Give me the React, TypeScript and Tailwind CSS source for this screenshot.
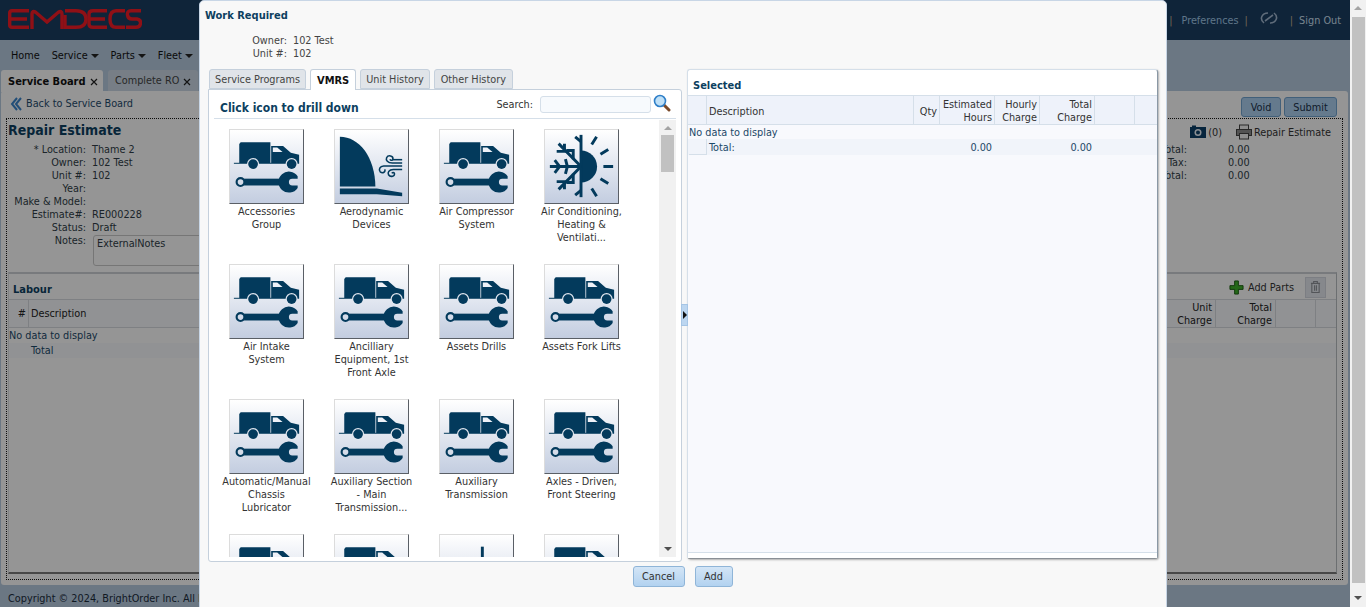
const FONT = "font-['DejaVu_Sans_Condensed','Noto_Sans',sans-serif]";

function TruckIcon() {
  return (
    <svg viewBox="0 0 75 75" className="w-full h-full">
      <path d="M9.5 14.5 L11 12.5 H41.5 V34 H9.5 Z" fill="#033a5c" />
      <path d="M42.3 16.5 H54.5 L62.5 23.5 L71 25.5 V34 H42.3 Z" fill="#033a5c" />
      <path d="M44 18 H48.5 L54 22.7 H44 Z" fill="#eef1f7" />
      <rect x="4" y="33.7" width="67" height="1" fill="#033a5c" />
      <circle cx="23.7" cy="35" r="6.2" fill="#e2e7f0" />
      <circle cx="23.7" cy="35" r="5" fill="#033a5c" />
      <circle cx="63.3" cy="35" r="6.2" fill="#e2e7f0" />
      <circle cx="63.3" cy="35" r="5" fill="#033a5c" />
      <circle cx="10.8" cy="53.5" r="4" fill="none" stroke="#033a5c" strokeWidth="2.2" />
      <rect x="14.5" y="50" width="37" height="7" fill="#033a5c" />
      <path d="M69.5 47.5 A 10.8 10.8 0 1 0 69.5 59.5 L 69.5 57 H 64 A 3.5 3.5 0 0 1 64 50 H 69.5 Z" fill="#033a5c" />
    </svg>
  );
}

function AeroIcon() {
  return (
    <svg viewBox="0 0 75 75" className="w-full h-full">
      <path d="M5 7 C 25 7 41 28 41.5 58 H5 Z" fill="#033a5c" />
      <path d="M5 60 H43 L69 64.5 V68 L43 66 H5 Z" fill="#033a5c" />
      <g fill="none" stroke="#033a5c" strokeWidth="1.6">
        <path d="M69 34 H59 C 54 34 52 31 53 28.5 C 54.5 25.5 60 26 59.5 30 C 59 31.5 57 31.5 56.5 30" />
        <path d="M69 37 H50 C 46 37 44.5 41 46.5 43 C 49 45 52.5 43 51 40.5" />
        <path d="M69 40.5 H60 C 55 40.5 54 44 55 46 C 57 49 62 47.5 61 44.5 C 60.5 43.5 59 43.5 58.5 44.5" />
        <path d="M59 30.5 H69" />
      </g>
    </svg>
  );
}

function AcIcon() {
  return (
    <svg viewBox="0 0 75 75" className="w-full h-full">
      <path d="M37 21 A 16.5 16.5 0 0 1 37 54 Z" fill="#033a5c" />
      <g stroke="#033a5c" strokeWidth="3" fill="none">
        <path d="M37 5 V69" />
        <path d="M31 7 L37 12 M31 67 L37 62" />
        <path d="M5 37.5 H37" />
        <path d="M14 14 L37 37.5 M14 61 L37 37.5" />
        <path d="M10 31 L15 37.5 L10 44" />
        <path d="M21 30 L23 37.5 L21 45" />
        <path d="M12 22 H20 V14 M22 21 H29 V30" />
        <path d="M12 53 H20 V61 M22 54 H29 V45" />
      </g>
      <g stroke="#033a5c" strokeWidth="3" fill="none">
        <path d="M48 15 L53 7 M57 25 L65 20 M60 37.5 H70 M57 50 L65 55 M48 60 L53 68" />
      </g>
    </svg>
  );
}

function PartIcon() {
  return (
    <svg viewBox="0 0 75 75" className="w-full h-full">
      <rect x="42" y="12" width="3" height="63" fill="#033a5c" />
    </svg>
  );
}

const items: { label: string[]; icon?: "aero" | "ac" | "part" }[] = [
  { label: ["Accessories", "Group"] },
  { label: ["Aerodynamic", "Devices"], icon: "aero" },
  { label: ["Air Compressor", "System"] },
  { label: ["Air Conditioning,", "Heating &", "Ventilati..."], icon: "ac" },
  { label: ["Air Intake", "System"] },
  { label: ["Ancilliary", "Equipment, 1st", "Front Axle"] },
  { label: ["Assets Drills"] },
  { label: ["Assets Fork Lifts"] },
  { label: ["Automatic/Manual", "Chassis", "Lubricator"] },
  { label: ["Auxiliary Section", "- Main", "Transmission..."] },
  { label: ["Auxiliary", "Transmission"] },
  { label: ["Axles - Driven,", "Front Steering"] },
  { label: [] },
  { label: [] },
  { label: [], icon: "part" },
  { label: [] },
];

function Tile({ label, icon }: { label: string[]; icon?: "aero" | "ac" | "part" }) {
  return (
    <div className="h-[135px] flex flex-col items-center">
      <div className="w-[75px] h-[75px] shrink-0 border-t border-l border-t-[#dcdcdc] border-l-[#dcdcdc] border-r border-b border-r-[#5a5f66] border-b-[#5a5f66] bg-gradient-to-b from-white to-[#c3cde0]">
        {icon === "aero" ? <AeroIcon /> : icon === "ac" ? <AcIcon /> : icon === "part" ? <PartIcon /> : <TruckIcon />}
      </div>
      <div className="mt-[1px] text-center leading-[13px] text-[#333]">
        {label.map((l) => (
          <div key={l}>{l}</div>
        ))}
      </div>
    </div>
  );
}

function Caret() {
  return <span className="inline-block ml-[3px] mb-[1px] border-x-[4px] border-x-transparent border-t-[4px] border-t-[#222]" />;
}

function CloseX() {
  return (
    <svg viewBox="0 0 8 8" className="w-[8px] h-[8px] mt-[2px]" fill="none" stroke="#222" strokeWidth="1.2">
      <path d="M1 1 L7 7 M7 1 L1 7" />
    </svg>
  );
}

function PageBehind() {
  return (
    <div className="w-[1350px] h-[607px] overflow-hidden bg-[#b2c6da] text-[10.8px] leading-[13px] text-[#333] relative">
      {/* Header */}
      <div className="h-10 bg-[#193c5f] flex items-center justify-between pr-[9px]">
        <svg viewBox="0 0 134 20" className="ml-[8px] w-[134px] h-[20px] mb-[2px]" fill="none" stroke="#ee1c25" strokeWidth="3.4">
          <path d="M21 1.7 H4 Q1.7 1.7 1.7 4 V16 Q1.7 18.3 4 18.3 H21 M1.7 10 H19" />
          <path d="M24 20 V5 Q24 1 28 3.5 L39 13 L50 3.5 Q54 1 54 5 V20" />
          <path d="M57 1.7 H68 Q78 1.7 78 10 Q78 18.3 68 18.3 H57 V6" />
          <path d="M99 1.7 H85 Q81 1.7 81 5 V15 Q81 18.3 85 18.3 H99 M81 10 H97" />
          <path d="M117 1.7 H108 Q102 1.7 102 10 Q102 18.3 108 18.3 H117" />
          <path d="M133 1.7 H123 Q119 1.7 119.5 6 Q120 10 124 10 H129 Q133 10.5 132.5 14.5 Q132 18.3 128 18.3 H118" />
        </svg>
        <div className="flex items-center text-[#9fc4e2]">
          <span className="text-[#b9a98f]">|</span>
          <span className="ml-[9px]">Preferences</span>
          <span className="ml-[6px] text-[#b9a98f]">|</span>
          <svg viewBox="0 0 18 12" className="ml-[12px] w-[18px] h-[12px] mb-[4px]" fill="none" stroke="#9fb4cc" strokeWidth="1.6">
            <path d="M4 11 C -1 7 2 1 8 1 M14 1 C 19 5 16 11 10 11 M5 9 L13 3" />
          </svg>
          <span className="ml-[12px] text-[#b9a98f]">|</span>
          <span className="ml-[6px] text-[#c8dcec]">Sign Out</span>
        </div>
      </div>

      {/* Nav */}
      <div className="h-[30px] flex items-center pl-[11px] gap-[12px] text-[#111]">
        <span>Home</span>
        <span>Service<Caret /></span>
        <span>Parts<Caret /></span>
        <span>Fleet<Caret /></span>
      </div>

      {/* Tabs */}
      <div className="h-[21px] flex pl-[1px] gap-[5px]">
        <div className="w-[102px] h-[22px] bg-[#f9f9f9] rounded-t-[3px] flex items-center gap-[4px] pl-[7px] text-[11px] font-bold text-[#111]">
          Service Board <CloseX />
        </div>
        <div className="w-[90px] h-[21px] bg-[#c6d3e0] rounded-t-[3px] flex items-center gap-[4px] pl-[7px] text-[#444]">
          Complete RO <CloseX />
        </div>
      </div>

      {/* Content */}
      <div className="mx-[1px] w-[1347px] h-[494px] bg-[#f9f9f9] rounded-[3px] px-[5px]">
        <div className="h-[27px] flex items-center justify-between pr-[6px]">
          <div className="flex items-center gap-[4px] pl-[4px] pb-[2px] text-[#1f4a6b]">
            <svg viewBox="0 0 12 14" className="w-[12px] h-[14px]" fill="none" stroke="#3a82c8" strokeWidth="2">
              <path d="M7 1 L2 7 L7 13 M11 1 L6 7 L11 13" />
            </svg>
            Back to Service Board
          </div>
          <div className="flex gap-[3px] mt-[5px]">
            <div className="h-[20px] w-[40px] flex items-center justify-center rounded-[3px] border border-[#6fa0cc] bg-[#a8cbeb] text-[#1a3048]">Void</div>
            <div className="h-[20px] w-[53px] flex items-center justify-center rounded-[3px] border border-[#6fa0cc] bg-[#a8cbeb] text-[#1a3048]">Submit</div>
          </div>
        </div>

        <div className="h-[462px] w-[1337px] border border-dotted border-[#111] pl-[1px] pr-[5px] pt-[3px]">
          <div className="h-[150px] flex justify-between">
            <div>
              <div className="-mt-[1px] text-[14px] leading-[18px] font-bold text-[#0d3f60] mb-[4px]">Repair Estimate</div>
              <div className="grid grid-cols-[78px_auto] gap-x-[6px] text-[#2f3c46]">
                <div className="text-right">* Location:</div><div>Thame 2</div>
                <div className="text-right">Owner:</div><div>102 Test</div>
                <div className="text-right">Unit #:</div><div>102</div>
                <div className="text-right">Year:</div><div></div>
                <div className="text-right">Make &amp; Model:</div><div></div>
                <div className="text-right">Estimate#:</div><div>RE000228</div>
                <div className="text-right">Status:</div><div>Draft</div>
                <div className="text-right">Notes:</div>
                <div className="w-[200px] h-[31px] mt-[1px] ml-[1px] border border-[#c5c5c5] rounded-[3px] pl-[3px] pt-[1px]">ExternalNotes</div>
              </div>
            </div>
            <div className="w-[200px] pr-[6px]">
              <div className="flex items-center justify-end gap-[14px] mt-[2px] h-[16px]">
                <div className="flex items-center gap-[2px]">
                  <svg viewBox="0 0 16 14" className="w-[16px] h-[14px]">
                    <rect x="2" y="0.5" width="4" height="2" fill="#0c3f66" />
                    <rect x="0" y="2" width="16" height="11" fill="#0c3f66" />
                    <circle cx="8" cy="7.5" r="3.5" fill="#e8eef5" />
                    <circle cx="8" cy="7.5" r="2" fill="#0c3f66" />
                  </svg>
                  (0)
                </div>
                <div className="flex items-center gap-[2px]">
                  <svg viewBox="0 0 16 16" className="w-[16px] h-[16px]">
                    <rect x="3.5" y="1" width="9" height="5" fill="#eee" stroke="#444" />
                    <rect x="0.5" y="5.5" width="15" height="6" fill="#8a8a8a" stroke="#444" />
                    <rect x="3.5" y="9.5" width="9" height="5.5" fill="#eee" stroke="#444" />
                  </svg>
                  Repair Estimate
                </div>
              </div>
              <div className="mt-[3px] text-[#2f3c46]">
                <div className="flex"><span className="w-[50px] text-right whitespace-nowrap">Sub Total:</span><span className="ml-[41px]">0.00</span></div>
                <div className="flex"><span className="w-[50px] text-right">Tax:</span><span className="ml-[41px]">0.00</span></div>
                <div className="flex"><span className="w-[50px] text-right">Total:</span><span className="ml-[41px]">0.00</span></div>
              </div>
            </div>
          </div>

          {/* Labour */}
          <div className="h-[302px] border-t-2 border-r border-b-2 border-l border-t-[#c9ccd0] border-r-[#b5b9bd] border-b-[#777] border-l-[#d8dadd]">
            <div className="h-[25px] flex items-center justify-between pl-[4px] pr-[10px]">
              <span className="font-bold text-[11px] text-[#0d3f60] mt-[5px]">Labour</span>
              <div className="flex items-center">
                <svg viewBox="0 0 16 16" className="w-[15px] h-[15px] mr-[4px] mt-[2px]">
                  <path d="M6 1 H10 V6 H15 V10 H10 V15 H6 V10 H1 V6 H6 Z" fill="#3fae2a" stroke="#1a5c10" />
                </svg>
                <span className="text-[#333] mt-[2px]">Add Parts</span>
                <div className="ml-[11px] w-[21px] h-[21px] bg-[#dfe3ea] border border-[#cfd3da] flex items-center justify-center mt-[1px]">
                  <svg viewBox="0 0 12 14" className="w-[11px] h-[14px]" fill="none" stroke="#8a8e94" strokeWidth="1.2">
                    <path d="M1 3 H11 M4 3 V1 H8 V3 M2 3 V13 H10 V3 M5 5 V11 M7 5 V11" />
                  </svg>
                </div>
              </div>
            </div>
            <div className="h-[29px] flex border-y border-[#d3d6da] bg-[#f2f4f7] text-[#222]">
              <div className="w-[20px] border-r border-[#d3d6da] text-right pr-[2px] self-stretch flex items-center justify-end">#</div>
              <div className="w-[1127px] pl-[2px] flex items-center">Description</div>
              <div className="w-[60px] border-r border-[#d3d6da] text-right pr-[3px] flex items-center justify-end">Unit<br />Charge</div>
              <div className="w-[60px] text-right pr-[3px] border-r border-[#d3d6da] flex items-center justify-end">Total<br />Charge</div>
              <div className="w-[40px] border-r border-[#d3d6da]"></div>
              <div className="flex-1"></div>
            </div>
            <div className="h-[15px] flex items-center text-[#1c4868]">No data to display</div>
            <div className="h-[15px] flex items-center bg-[#f2f4f7] pl-[22px] text-[#1c4868]">Total</div>
          </div>
        </div>
      </div>

      {/* Footer */}
      <div className="pl-[8px] pt-[7px] text-[#1a2b3a]">Copyright © 2024, BrightOrder Inc. All Rights Reserved.</div>
    </div>
  );
}

function Modal() {
  return (
    <div className="absolute left-[199px] top-0 w-[968px] h-[620px] bg-[#f8f8f8] border border-[#c8d6e6] rounded-[5px] text-[10.8px] leading-[13px] text-[#333] flex flex-col pl-[8px] pr-[8px]">
      <div className="h-[33px] pt-[8px] -ml-[3px] text-[11px] font-bold text-[#0d3f60]">Work Required</div>
      <div className="grid grid-cols-[79px_auto] gap-x-[6px] content-start h-[35px] text-[#444]">
        <div className="text-right">Owner:</div><div>102 Test</div>
        <div className="text-right">Unit #:</div><div>102</div>
      </div>

      <div className="flex h-[493px]">
        {/* Left: tabs and icon list */}
        <div className="w-[474px] flex flex-col">
          <div className="h-[21px] flex gap-[4px] pl-[1px] relative z-10">
            <div className="h-[20px] px-[5px] flex items-center bg-[#e0e4e9] border border-[#c5d0dc] rounded-t-[3px] text-[#444]">Service Programs</div>
            <div className="h-[21px] px-[6px] flex items-center bg-white border border-b-0 border-[#c5d0dc] rounded-t-[3px] text-[11px] font-bold text-[#111]">VMRS</div>
            <div className="h-[20px] px-[5px] flex items-center bg-[#e0e4e9] border border-[#c5d0dc] rounded-t-[3px] text-[#444]">Unit History</div>
            <div className="h-[20px] px-[6px] flex items-center bg-[#e0e4e9] border border-[#c5d0dc] rounded-t-[3px] text-[#444]">Other History</div>
          </div>
          <div className="-mt-[1px] h-[473px] bg-white border border-[#c5d0dc] rounded-b-[3px] rounded-tr-[3px] px-[5px] flex flex-col">
            <div className="h-[29px] flex items-center border-b border-[#d5dfe9] shrink-0">
              <span className="ml-[6px] text-[12px] font-bold text-[#0d3f60] mt-[8px]">Click icon to drill down</span>
              <span className="ml-auto text-[#333]">Search:</span>
              <div className="ml-[7px] w-[111px] h-[17px] bg-[#f7fafd] border border-[#d5dfe9] rounded-[3px]"></div>
              <svg viewBox="0 0 18 18" className="ml-[2px] mr-[5px] w-[18px] h-[18px] mb-[2px]">
                <path d="M11 11 L16 16" stroke="#7a4a2a" strokeWidth="3" strokeLinecap="round" />
                <circle cx="7" cy="7" r="5.5" fill="#bfe0f7" stroke="#2f7fc8" strokeWidth="1.6" />
              </svg>
            </div>
            <div className="flex h-[437px] mt-[1px] overflow-hidden">
              <div className="w-[445px] pt-[9px] overflow-hidden">
                <div className="grid grid-cols-[105px_105px_105px_105px]">
                  {items.map((it, i) => (
                    <Tile key={i} label={it.label} icon={it.icon} />
                  ))}
                </div>
              </div>
              <div className="w-[17px] bg-[#f1f1f1] flex flex-col items-center">
                <span className="mt-[6px] border-x-[4px] border-x-transparent border-b-[4px] border-b-[#a3a3a3]" />
                <div className="w-[13px] h-[37px] mt-[5px] bg-[#c1c1c1]" />
                <span className="mt-auto mb-[6px] border-x-[4px] border-x-transparent border-t-[4px] border-t-[#505050]" />
              </div>
            </div>
          </div>
        </div>

        {/* Splitter */}
        <div className="w-[7px] h-[22px] mt-[235px] -ml-[1px] shrink-0 bg-[#bcd6f0] border border-[#a5c5e5] flex items-center justify-center z-10">
          <span className="border-y-[4px] border-y-transparent border-l-[4px] border-l-[#111]" />
        </div>

        {/* Right: selected */}
        <div className="w-[471px] -ml-[1px] h-[490px] bg-white border border-[#d5dfe9] border-r-[#8a98a5] border-b-[#8a8f95] rounded-[3px] shadow-[1px_1px_2px_rgba(0,0,0,0.3)] flex flex-col">
          <div className="h-[25px] flex items-end pb-[3px] pl-[5px] text-[11px] font-bold text-[#0d3f60]">Selected</div>
          <div className="h-[30px] flex bg-[#eef2fa] border-y border-[#d5dfe9] text-[#333] shrink-0 pl-[1px]">
            <div className="w-[18px] border-r border-[#d5dfe9]"></div>
            <div className="w-[207px] pl-[2px] pt-[2px] border-r border-[#d5dfe9] flex items-center">Description</div>
            <div className="w-[26px] pr-[2px] pt-[2px] border-r border-[#d5dfe9] flex items-center justify-end">Qty</div>
            <div className="w-[55px] pr-[2px] pt-[1px] border-r border-[#d5dfe9] flex items-center text-right justify-end">Estimated<br />Hours</div>
            <div className="w-[45px] pr-[2px] pt-[1px] border-r border-[#d5dfe9] flex items-center text-right justify-end">Hourly<br />Charge</div>
            <div className="w-[55px] pr-[2px] pt-[1px] border-r border-[#d5dfe9] flex items-center text-right justify-end">Total<br />Charge</div>
            <div className="w-[40px] border-r border-[#d5dfe9]"></div>
            <div className="flex-1"></div>
          </div>
          <div className="flex-1 bg-[#f8f9fd] text-[#1c4868]">
            <div className="h-[14px] flex items-center pl-[1px]">No data to display</div>
            <div className="h-[16px] flex bg-[#f1f4fa] pl-[1px]">
              <div className="w-[18px] border-r border-b border-[#d5dfe9]"></div>
              <div className="w-[233px] pl-[2px] flex items-center">Total:</div>
              <div className="w-[55px] pr-[3px] flex items-center justify-end">0.00</div>
              <div className="w-[45px]"></div>
              <div className="w-[55px] pr-[3px] flex items-center justify-end">0.00</div>
            </div>
          </div>
          <div className="h-[6px] bg-white border-t border-[#d5dfe9]"></div>
        </div>
      </div>

      {/* Buttons */}
      <div className="flex justify-center gap-[10px] mt-[4px] pr-[1px]">
        <div className="w-[52px] h-[21px] flex items-center justify-center rounded-[3px] border border-[#8fb5d8] bg-gradient-to-b from-[#d3e5f6] to-[#b2d2f0] text-[#333]">Cancel</div>
        <div className="w-[38px] h-[21px] flex items-center justify-center rounded-[3px] border border-[#8fb5d8] bg-gradient-to-b from-[#d3e5f6] to-[#b2d2f0] text-[#333]">Add</div>
      </div>
    </div>
  );
}

export default function App() {
  return (
    <div className={`${FONT} h-[607px] overflow-hidden flex`}>
      <div className="relative w-[1350px] h-[607px]">
        <PageBehind />
        <div className="absolute inset-0 bg-black/40" />
        <Modal />
      </div>
      {/* Browser scrollbar */}
      <div className="w-4 h-[607px] bg-[#f1f1f1] flex flex-col items-center">
        <span className="mt-[6px] border-x-[4px] border-x-transparent border-b-[4px] border-b-[#a3a3a3]" />
        <div className="w-[13px] h-[566px] mt-[7px] bg-[#c1c1c1]" />
        <span className="mt-[13px] border-x-[4px] border-x-transparent border-t-[4px] border-t-[#505050]" />
      </div>
    </div>
  );
}
